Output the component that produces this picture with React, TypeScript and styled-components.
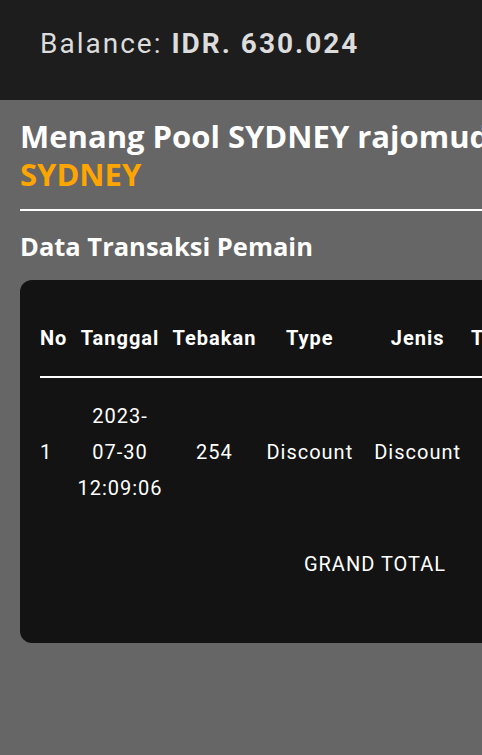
import React from "react";
import styled, { createGlobalStyle } from "styled-components";

const Global = createGlobalStyle`
  html, body { margin: 0; padding: 0; background: #666666; }
  body { font-family: "Roboto", "Liberation Sans", sans-serif; overflow-x: hidden; }
  * { box-sizing: border-box; }
`;

const Page = styled.div`
  min-height: 755px;
  background: #666666;
  width: 760px;
`;

const TopBar = styled.header`
  height: 100px;
  background: #1d1d1d;
  padding: 27px 40px 0;
`;

const Balance = styled.div`
  font-family: "Roboto", sans-serif;
  font-size: 28px;
  line-height: 34px;
  letter-spacing: 2px;
  color: #dcdcdc;
  b { font-weight: 700; }
`;

const Content = styled.main`
  padding: 17px 20px 20px;
`;

const Title = styled.h1`
  margin: 0;
  font-family: "Open Sans", sans-serif;
  font-size: 31px;
  line-height: 38px;
  font-weight: 700;
  color: #ffffff;
  white-space: nowrap;
`;

const Accent = styled.span`
  display: block;
  color: #ffa500;
`;

const Divider = styled.hr`
  margin: 16px 0 0;
  border: none;
  border-top: 2px solid #ffffff;
`;

const SubTitle = styled.h2`
  margin: 19px 0 0;
  font-family: "Open Sans", sans-serif;
  font-size: 25.5px;
  line-height: 32px;
  font-weight: 700;
  color: #ffffff;
`;

const Card = styled.section`
  margin-top: 18px;
  background: #131313;
  border-radius: 12px;
  padding: 20px 20px 41px;
`;

const Table = styled.table`
  border-collapse: collapse;
  color: #ffffff;
  font-family: "Roboto", sans-serif;
  font-size: 20px;
  letter-spacing: 1px;
  line-height: 36px;
`;

const cellPad = (col: number) =>
  col === 0 ? "20px 5px 20px 0" : col === 4 ? "20px 5px 20px 16px" : "20px 5px";

const Th = styled.th<{ $col: number }>`
  font-weight: 700;
  padding: ${(p) => cellPad(p.$col)};
  text-align: ${(p) => (p.$col === 0 ? "left" : "center")};
  border-bottom: 2px solid #ffffff;
  white-space: nowrap;
`;

const Td = styled.td<{ $col: number; $narrow?: boolean }>`
  font-weight: 400;
  padding: ${(p) => cellPad(p.$col)};
  text-align: ${(p) => (p.$col === 0 ? "left" : "center")};
  vertical-align: middle;
  width: ${(p) => (p.$narrow ? "1px" : "auto")};
`;

const Total = styled.td`
  padding: 20px 20px 20px 0;
  text-align: right;
`;

const headers = ["No", "Tanggal", "Tebakan", "Type", "Jenis", "Taruhan", "Diskon", "Bayar", "Menang"];
const row = ["1", "2023-07-30 12:09:06", "254", "Discount", "Discount", "1.000", "0", "1.000", "0"];
const totals = ["1.000", "0", "1.000", "0"];

export default function App() {
  return (
    <>
      <Global />
      <Page>
        <TopBar>
          <Balance>
            Balance: <b>IDR. 630.024</b>
          </Balance>
        </TopBar>
        <Content>
          <Title>
            Menang Pool SYDNEY rajomudo<Accent>SYDNEY</Accent>
          </Title>
          <Divider />
          <SubTitle>Data Transaksi Pemain</SubTitle>
          <Card>
            <Table>
              <thead>
                <tr>
                  {headers.map((h, i) => (
                    <Th key={h} $col={i}>{h}</Th>
                  ))}
                </tr>
              </thead>
              <tbody>
                <tr>
                  {row.map((v, i) => (
                    <Td key={i} $col={i} $narrow={i === 1}>{v}</Td>
                  ))}
                </tr>
              </tbody>
              <tfoot>
                <tr>
                  <Total colSpan={5}>GRAND TOTAL</Total>
                  {totals.map((v, i) => (
                    <Td key={i} $col={i + 5}>{v}</Td>
                  ))}
                </tr>
              </tfoot>
            </Table>
          </Card>
        </Content>
      </Page>
    </>
  );
}
